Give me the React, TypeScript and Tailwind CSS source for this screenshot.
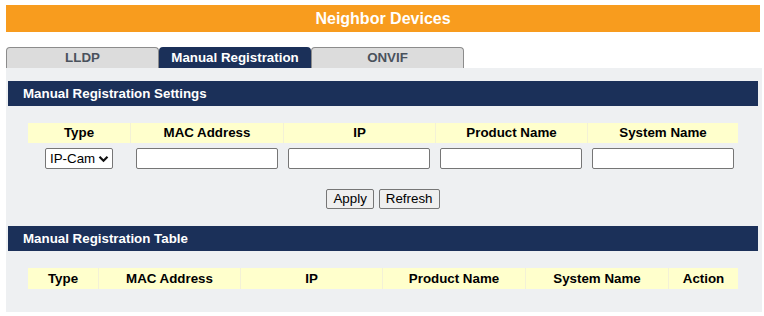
import React from "react";

const navy = "bg-[#1b3059]";

function Chevron() {
  return (
    <svg
      width="11"
      height="8"
      viewBox="0 0 11 8"
      className="pointer-events-none absolute right-[4px] top-[7px]"
    >
      <path d="M1.5 1.8 L5.5 5.8 L9.5 1.8" fill="none" stroke="#111" strokeWidth="2.2" />
    </svg>
  );
}

export default function App() {
  const cols1 = ["Type", "MAC Address", "IP", "Product Name", "System Name"];
  const w1 = ["w-[102px]", "w-[153px]", "w-[152px]", "w-[152px]", "w-[151px]"];
  const cols2 = ["Type", "MAC Address", "IP", "Product Name", "System Name", "Action"];
  const w2 = ["w-[70px]", "w-[142px]", "w-[142px]", "w-[143px]", "w-[143px]", "w-[70px]"];

  return (
    <div className="w-[764px] h-[316px] bg-white pt-[5px] pl-[6px] font-['Liberation_Sans',Arial,sans-serif] text-[13.33px] text-black">
      <div className="w-[754px] h-[27px] bg-[#f89c1e] flex items-center justify-center text-white font-bold text-[16px]">
        Neighbor Devices
      </div>

      <div className="mt-[15px] flex h-[21px]">
        <div className="w-[153px] h-full rounded-t-[4px] border border-b-0 border-[#8c8c8c] bg-[#dcdcdc] flex items-center justify-center font-bold text-[#4a525c]">
          LLDP
        </div>
        <div className={`w-[152px] h-full rounded-t-[4px] ${navy} flex items-center justify-center font-bold text-white`}>
          Manual Registration
        </div>
        <div className="w-[153px] h-full rounded-t-[4px] border border-b-0 border-[#8c8c8c] bg-[#dcdcdc] flex items-center justify-center font-bold text-[#4a525c]">
          ONVIF
        </div>
      </div>

      <div className="w-[756px] h-[244px] bg-[#eef0f2] pt-[13px] pl-[2px]">
        <div className={`w-[750px] h-[25px] ${navy} flex items-center pl-[15px] font-bold text-white`}>
          Manual Registration Settings
        </div>

        <div className="ml-[20px] mt-[17px] w-[710px]">
          <div className="flex h-[20px] bg-[#ffffcc]">
            {cols1.map((c, i) => (
              <div
                key={c}
                className={`${w1[i]} h-full flex items-center justify-center font-bold ${i > 0 ? "border-l border-[#f3f1d6]" : ""}`}
              >
                {c}
              </div>
            ))}
          </div>
          <div className="flex mt-[5px] h-[21px]">
            <div className={`${w1[0]} flex justify-center`}>
              <div className="relative w-[68px] h-[21px]">
                <select className="appearance-none w-full h-full border border-[#767676] rounded-[2px] bg-white pl-[4px] text-[13.33px] leading-none outline-none">
                  <option>IP-Cam</option>
                </select>
                <Chevron />
              </div>
            </div>
            {w1.slice(1).map((w, i) => (
              <div key={i} className={`${w} flex justify-center`}>
                <input
                  type="text"
                  className="w-[142px] h-[21px] border border-[#767676] rounded-[2px] bg-white outline-none"
                />
              </div>
            ))}
          </div>
        </div>

        <div className="mt-[20px] flex justify-center gap-[5px] w-[750px]">
          <button className="h-[20px] px-[6px] border border-[#767676] rounded-[2px] bg-[#efefef] text-[13.33px] leading-none">
            Apply
          </button>
          <button className="h-[20px] px-[6px] border border-[#767676] rounded-[2px] bg-[#efefef] text-[13.33px] leading-none">
            Refresh
          </button>
        </div>

        <div className={`mt-[17px] w-[750px] h-[25px] ${navy} flex items-center pl-[15px] font-bold text-white`}>
          Manual Registration Table
        </div>

        <div className="ml-[20px] mt-[17px] flex h-[21px] w-[710px] bg-[#ffffcc]">
          {cols2.map((c, i) => (
            <div
              key={c}
              className={`${w2[i]} h-full flex items-center justify-center font-bold ${i > 0 ? "border-l border-[#f3f1d6]" : ""}`}
            >
              {c}
            </div>
          ))}
        </div>
      </div>
    </div>
  );
}
